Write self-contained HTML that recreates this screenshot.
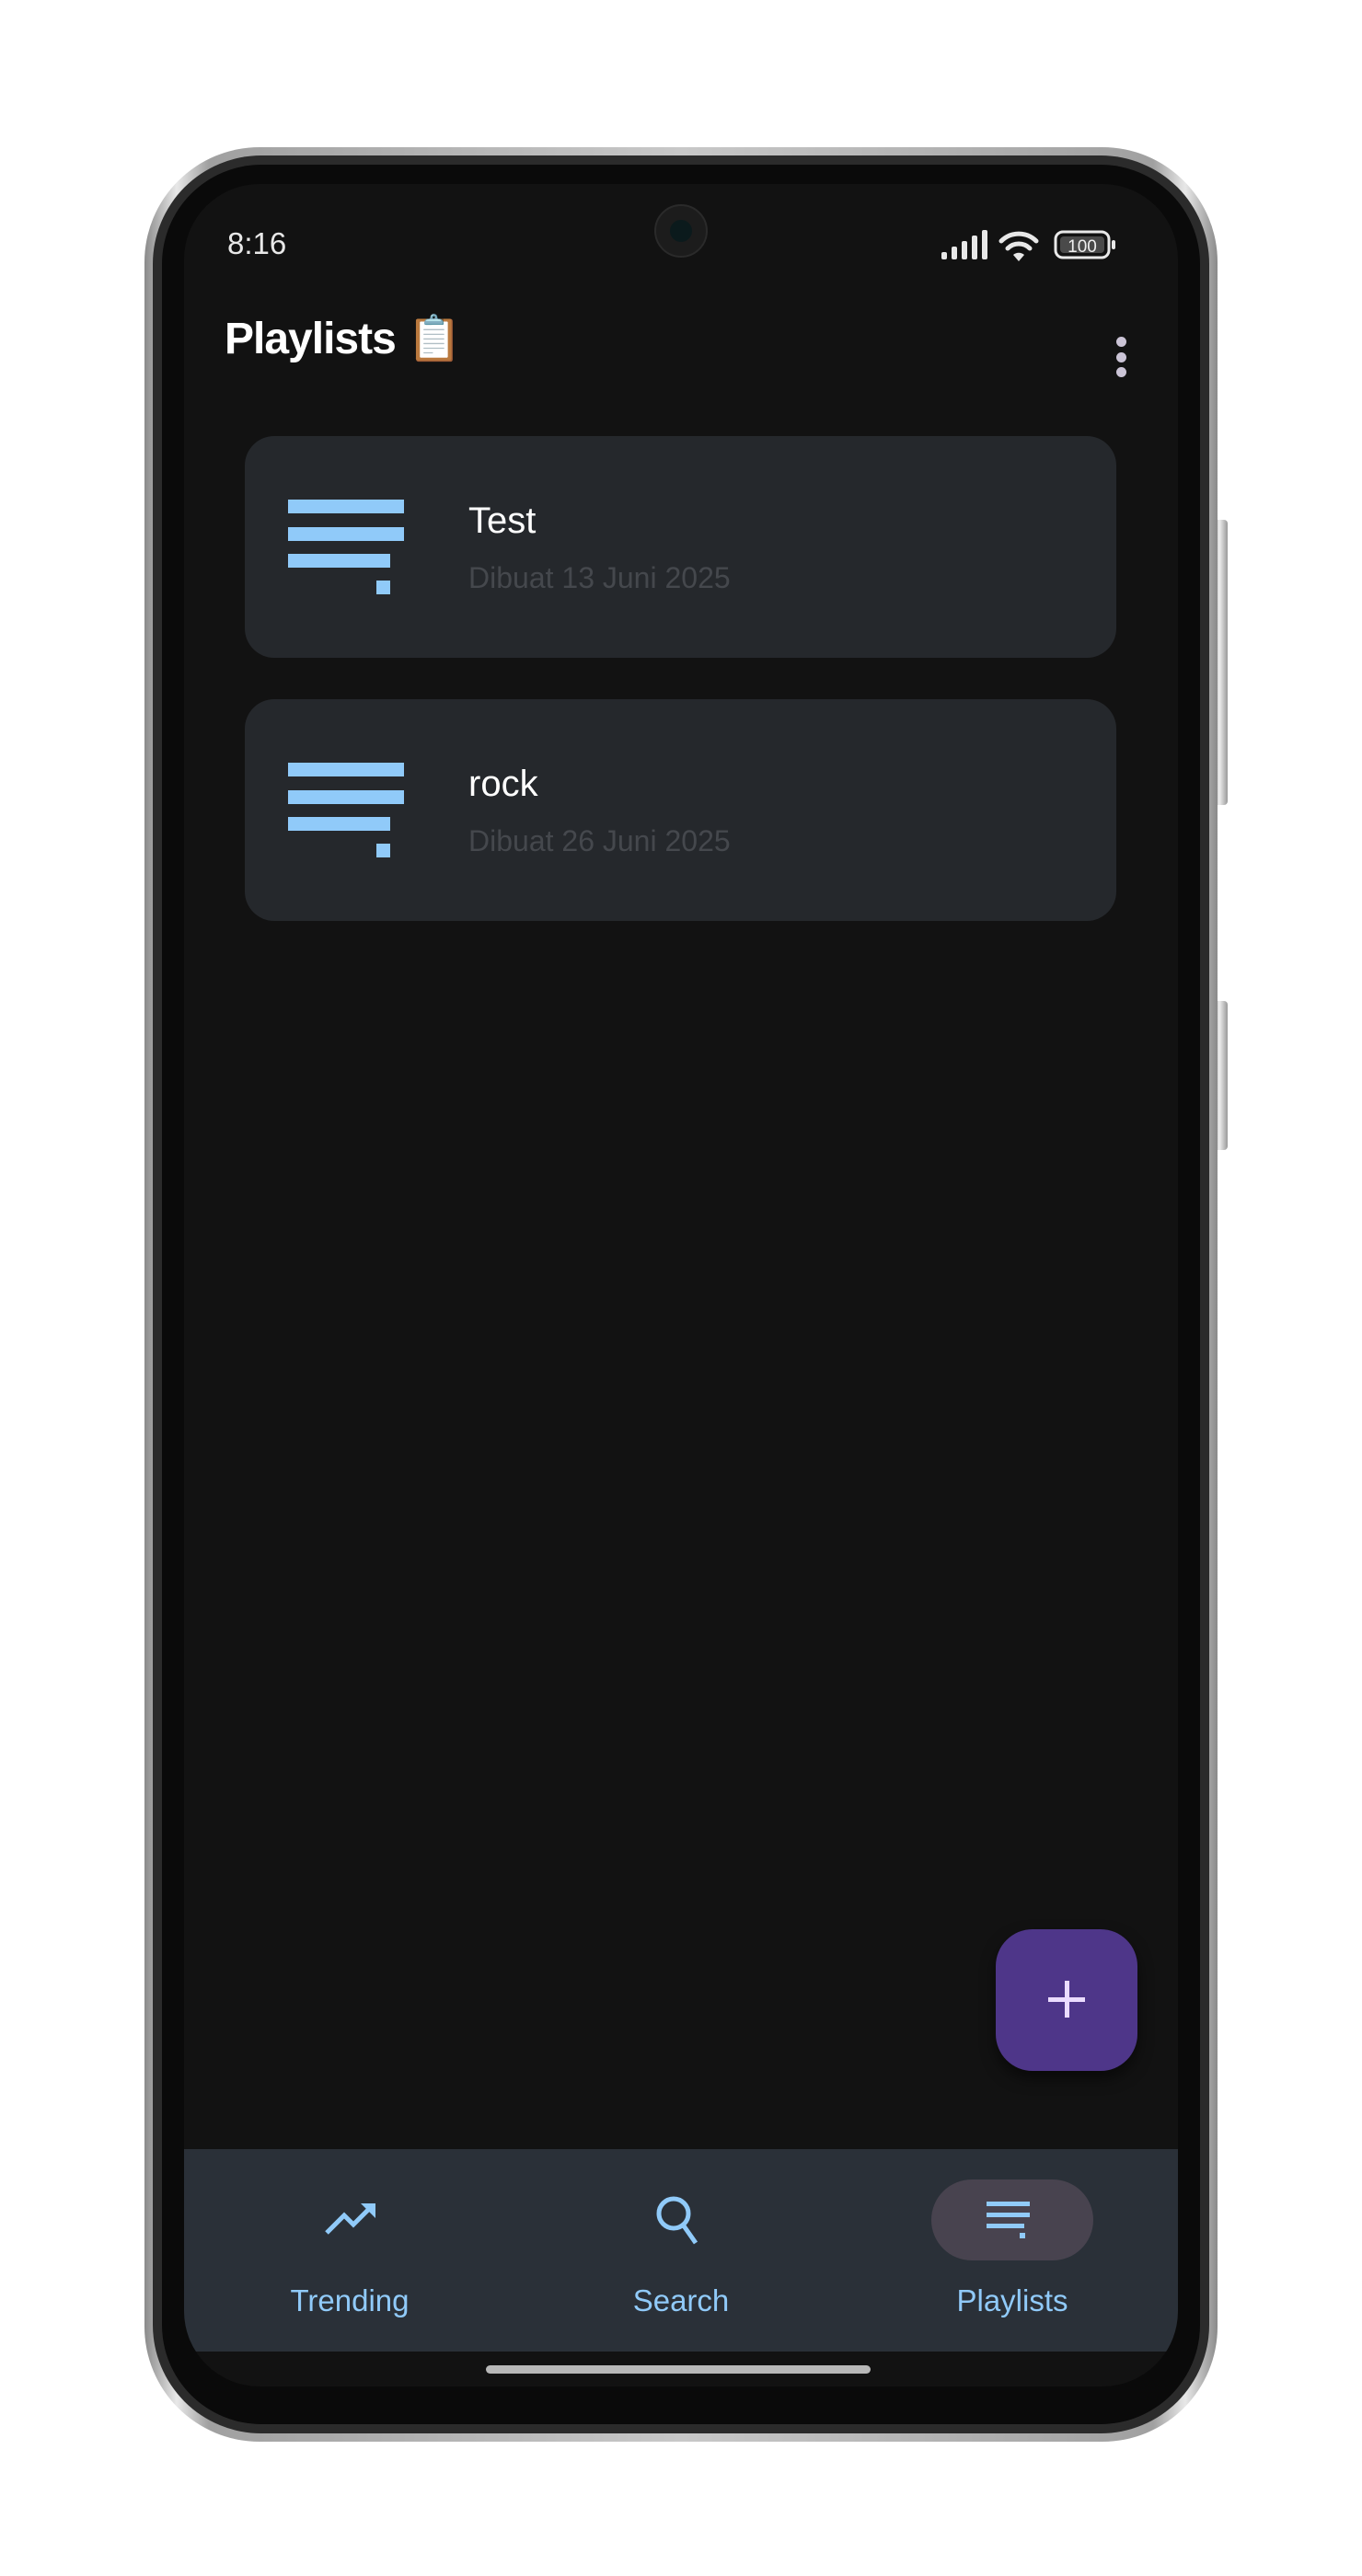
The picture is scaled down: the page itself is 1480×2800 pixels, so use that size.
<!DOCTYPE html>
<html><head><meta charset="utf-8"><style>
*{margin:0;padding:0;box-sizing:border-box}
body{width:1480px;height:2800px;background:#fff;position:relative;overflow:hidden;font-family:"Liberation Sans",sans-serif}
.abs{position:absolute}
</style></head><body>
<div class="abs" style="left:1316px;top:565px;width:18px;height:310px;background:linear-gradient(90deg,#888,#eee,#999);border-radius:4px"></div>
<div class="abs" style="left:1316px;top:1088px;width:18px;height:162px;background:linear-gradient(90deg,#888,#eee,#999);border-radius:4px"></div>
<div class="abs" style="left:157px;top:160px;width:1166px;height:2494px;border-radius:125px;background:linear-gradient(90deg,#8a8a8a,#e8e8e8 3%,#a0a0a0 6%,#c8c8c8 50%,#a0a0a0 94%,#e8e8e8 97%,#8a8a8a)"></div>
<div class="abs" style="left:166px;top:169px;width:1148px;height:2476px;border-radius:118px;background:#2b2b2b"></div>
<div class="abs" style="left:176px;top:179px;width:1128px;height:2456px;border-radius:108px;background:#0a0a0a"></div>
<div class="abs" style="left:200px;top:200px;width:1080px;height:2394px;border-radius:82px;background:#121212;overflow:hidden">
  <div class="abs" style="left:47px;top:46px;color:#e8e8e8;font-size:33px">8:16</div>
  <div class="abs" style="left:511px;top:22px;width:58px;height:58px;border-radius:50%;background:#1c1c1c;border:2px solid #2a2a2a"></div>
  <div class="abs" style="left:528px;top:39px;width:24px;height:24px;border-radius:50%;background:#0b1a1c"></div>
  <svg class="abs" style="left:820px;top:48px" width="200" height="40" viewBox="0 0 200 40">
    <g fill="#e8e8e8">
      <rect x="3" y="26" width="6" height="8" rx="2"/><rect x="14" y="20" width="6" height="14" rx="2"/><rect x="25" y="14" width="6" height="20" rx="2"/><rect x="36" y="8" width="6" height="26" rx="2"/><rect x="47" y="2" width="6" height="32" rx="2"/>
      <path d="M87 36 L81 29 A9 9 0 0 1 93 29 Z"/>
    </g>
    <g fill="none" stroke="#e8e8e8" stroke-width="5" stroke-linecap="round">
      <path d="M75 22 A17 17 0 0 1 99 22"/><path d="M68 14 A27 27 0 0 1 106 14"/>
    </g>
    <rect x="127" y="4" width="58" height="28" rx="8" fill="none" stroke="#e8e8e8" stroke-width="3"/>
    <rect x="132" y="9" width="48" height="18" rx="4" fill="#4a4a4a"/>
    <rect x="188" y="13" width="4" height="10" rx="2" fill="#e8e8e8"/>
    <text x="156" y="26" fill="#eee" font-size="19" font-family="Liberation Sans" text-anchor="middle">100</text>
  </svg>
  <div class="abs" style="left:44px;top:128px;color:#fff;font-size:48px;font-weight:bold;letter-spacing:-1px">Playlists <span style="font-family:'Noto Sans CJK JP',sans-serif;font-weight:normal">📋</span></div>
  <div class="abs" style="left:1013px;top:166px;width:11px;height:11px;border-radius:50%;background:#cbc4d6"></div>
  <div class="abs" style="left:1013px;top:183px;width:11px;height:11px;border-radius:50%;background:#cbc4d6"></div>
  <div class="abs" style="left:1013px;top:199px;width:11px;height:11px;border-radius:50%;background:#cbc4d6"></div>
  <div class="abs" style="left:66px;top:274px;width:947px;height:241px;border-radius:32px;background:#25282c">
    <div class="abs" style="left:47px;top:69px;width:126px;height:15px;background:#90caf9"></div>
    <div class="abs" style="left:47px;top:99px;width:126px;height:15px;background:#90caf9"></div>
    <div class="abs" style="left:47px;top:128px;width:111px;height:15px;background:#90caf9"></div>
    <div class="abs" style="left:143px;top:157px;width:15px;height:15px;background:#90caf9"></div>
    <div class="abs" style="left:243px;top:70px;color:#fff;font-size:40px">Test</div>
    <div class="abs" style="left:243px;top:136px;color:#45484d;font-size:32px">Dibuat 13 Juni 2025</div>
  </div>
  <div class="abs" style="left:66px;top:560px;width:947px;height:241px;border-radius:32px;background:#25282c">
    <div class="abs" style="left:47px;top:69px;width:126px;height:15px;background:#90caf9"></div>
    <div class="abs" style="left:47px;top:99px;width:126px;height:15px;background:#90caf9"></div>
    <div class="abs" style="left:47px;top:128px;width:111px;height:15px;background:#90caf9"></div>
    <div class="abs" style="left:143px;top:157px;width:15px;height:15px;background:#90caf9"></div>
    <div class="abs" style="left:243px;top:70px;color:#fff;font-size:40px">rock</div>
    <div class="abs" style="left:243px;top:136px;color:#45484d;font-size:32px">Dibuat 26 Juni 2025</div>
  </div>
  <div class="abs" style="left:882px;top:1897px;width:154px;height:154px;border-radius:40px;background:#4e3689;box-shadow:0 8px 16px rgba(0,0,0,.5)"></div>
  <div class="abs" style="left:939px;top:1971px;width:40px;height:5px;background:#ebdcff"></div>
  <div class="abs" style="left:957px;top:1953px;width:5px;height:40px;background:#ebdcff"></div>
  <div class="abs" style="left:0;top:2136px;width:1080px;height:220px;background:#2a3038"></div>
  <svg class="abs" style="left:150px;top:2192px" width="64" height="40" viewBox="0 0 64 40">
    <path d="M5 35 L24 16 L34 26 L54 6" fill="none" stroke="#90caf9" stroke-width="5"/>
    <path d="M42 3 L58 3 L58 19 Z" fill="#90caf9"/>
  </svg>
  <svg class="abs" style="left:508px;top:2184px" width="64" height="60" viewBox="0 0 64 60">
    <circle cx="24" cy="22" r="16" fill="none" stroke="#90caf9" stroke-width="5"/>
    <path d="M34 34 L48 54" stroke="#90caf9" stroke-width="5"/>
  </svg>
  <div class="abs" style="left:812px;top:2169px;width:176px;height:88px;border-radius:44px;background:#48434f"></div>
  <div class="abs" style="left:872px;top:2193px;width:47px;height:5px;background:#90caf9"></div>
  <div class="abs" style="left:872px;top:2205px;width:47px;height:5px;background:#90caf9"></div>
  <div class="abs" style="left:872px;top:2217px;width:41px;height:5px;background:#90caf9"></div>
  <div class="abs" style="left:908px;top:2227px;width:6px;height:6px;background:#90caf9"></div>
  <div class="abs" style="left:80px;top:2282px;width:200px;text-align:center;color:#90caf9;font-size:33px">Trending</div>
  <div class="abs" style="left:440px;top:2282px;width:200px;text-align:center;color:#90caf9;font-size:33px">Search</div>
  <div class="abs" style="left:800px;top:2282px;width:200px;text-align:center;color:#90caf9;font-size:33px">Playlists</div>
  <div class="abs" style="left:328px;top:2371px;width:418px;height:9px;border-radius:5px;background:#b8b8b8"></div>
</div>
</body></html>
